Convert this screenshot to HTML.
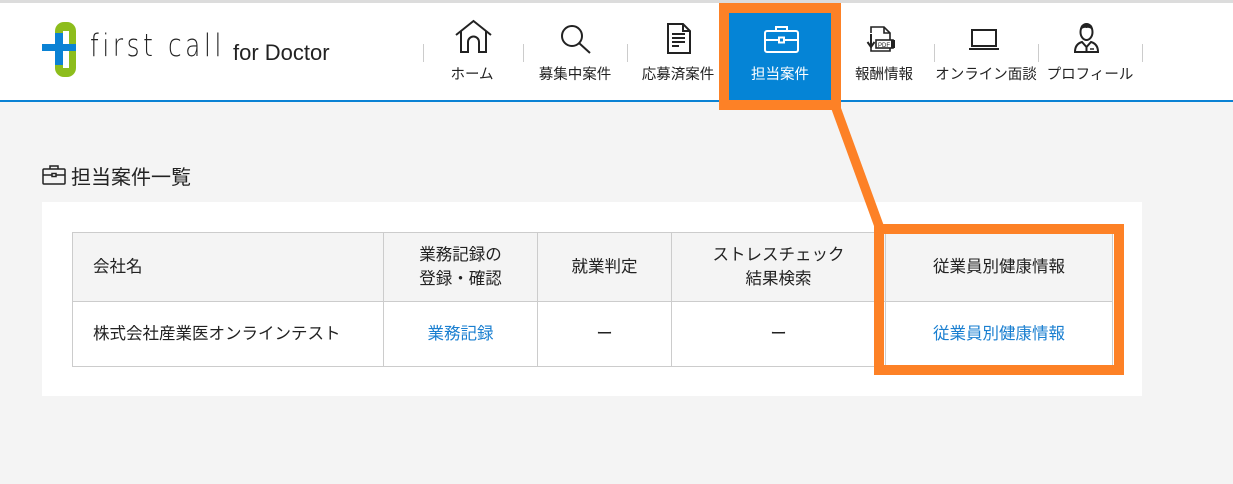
<!DOCTYPE html>
<html><head><meta charset="utf-8">
<style>
*{margin:0;padding:0;box-sizing:border-box}
body{width:1233px;height:484px;background:#f4f4f4;font-family:"Liberation Sans","Noto Sans CJK JP",sans-serif;position:relative;overflow:hidden;color:#222}
.top{position:absolute;left:0;top:0;width:1233px;height:3px;background:#dcdcdc}
.hdr{position:absolute;left:0;top:3px;width:1233px;height:99px;background:#fff;border-bottom:2px solid #0a82d4}
.abs{position:absolute}
.lbl{position:absolute;top:63px;font-size:14.5px;text-align:center;width:110px;white-space:nowrap;color:#222}
.sep{position:absolute;top:44px;width:1px;height:18px;background:#ccc}
svg{position:absolute;overflow:visible}
.panel{position:absolute;left:42px;top:202px;width:1100px;height:194px;background:#fff}
table{position:absolute;left:72px;top:232px;border-collapse:collapse;font-size:16.5px}
td{border:1px solid #ccc;text-align:center;vertical-align:middle;line-height:24px}
tr.h td{background:#f4f4f4;height:69px}
tr.b td{height:65px}
a{color:#1a7fd0;text-decoration:none}
.ob{position:absolute;border:10px solid #fd8126}
</style></head><body>
<div class="top"></div>
<div class="hdr"></div>
<!-- logo -->
<svg style="left:0;top:0" width="80" height="90">
<rect x="55" y="22" width="21" height="55" rx="9" fill="#8dbd1c"/>
<rect x="63" y="31" width="6" height="37" fill="#fff"/>
<rect x="55" y="33" width="8" height="32" fill="#0a82d4"/>
<rect x="42" y="44" width="34" height="7" fill="#0a82d4"/>
</svg>
<div class="abs" style="left:90px;top:28px;font-size:31px;letter-spacing:4.5px;color:#222;font-family:'DejaVu Sans','Liberation Sans',sans-serif;transform:scaleX(0.8);transform-origin:left;font-weight:200">first call</div>
<div class="abs" style="left:233px;top:40px;font-size:22px;color:#222">for Doctor</div>

<!-- separators -->
<div class="sep" style="left:423px"></div>
<div class="sep" style="left:523px"></div>
<div class="sep" style="left:627px"></div>
<div class="sep" style="left:934px"></div>
<div class="sep" style="left:1038px"></div>
<div class="sep" style="left:1142px"></div>

<!-- active -->
<div class="ob" style="left:719px;top:3px;width:122px;height:107px;background:#0584d6"></div>

<!-- icons -->
<svg style="left:455px;top:20px" width="37" height="33" fill="none" stroke="#222" stroke-width="2">
<path d="M1 15 L18.5 1 L36 15"/><path d="M6 11 V32 H13 V22 a5.5 5.5 0 0 1 11 0 V32 H31 V11"/></svg>
<svg style="left:561px;top:25px" width="30" height="29" fill="none" stroke="#222" stroke-width="2">
<circle cx="11" cy="11" r="10"/><path d="M18 18 L29 28"/></svg>
<svg style="left:667px;top:23px" width="24" height="31" fill="none" stroke="#222" stroke-width="2">
<path d="M1 1 H16 L23 8 V30 H1 Z"/><path d="M16 1 V8 H23"/><path d="M5 11H18M5 15H18M5 19H18M5 23H12"/></svg>
<svg style="left:764px;top:25px" width="35" height="28" fill="none" stroke="#fff" stroke-width="2">
<rect x="1" y="6" width="33" height="21" rx="2"/><path d="M12 6V2h11v4"/><path d="M1 15h33"/><rect x="15" y="12.5" width="5" height="5" fill="#0584d6"/></svg>
<svg style="left:866px;top:25px" width="30" height="28" fill="none" stroke="#222" stroke-width="1.6">
<path d="M5 8 V2 H18 L24 8 V15"/><path d="M5 20 V26 H24 V22"/><path d="M18 2 V8 H24"/><path d="M5 9 V20 M1.5 17 L5 22 L8.5 17" stroke-width="2"/>
<rect x="10" y="15" width="17" height="8" fill="#fff"/><rect x="25" y="15" width="4" height="8" fill="#222" stroke="none"/>
<text x="12" y="22" font-size="6" fill="#222" stroke="none" font-family="Liberation Sans">PDF</text></svg>
<svg style="left:969px;top:29px" width="30" height="22" fill="none" stroke="#222" stroke-width="2">
<rect x="3" y="1" width="24" height="16"/><path d="M0 20h30"/></svg>
<svg style="left:1074px;top:23px" width="25" height="31">
<ellipse cx="12.5" cy="9" rx="6" ry="8" fill="#fff" stroke="#222" stroke-width="2"/>
<path d="M6 8 Q6 0 12.5 1 Q19 0 19 8 Q16 4 12.5 5 Q9 4 6 8Z" fill="#222"/>
<path d="M1 29 Q1 21 8 19 L12.5 24 L17 19 Q24 21 24 29 Z" fill="#fff" stroke="#222" stroke-width="2"/>
<path d="M12.5 23 V29" stroke="#222" stroke-width="2"/><path d="M16 26h4" stroke="#222" stroke-width="1.5"/></svg>

<!-- labels -->
<div class="lbl" style="left:417px">ホーム</div>
<div class="lbl" style="left:520px">募集中案件</div>
<div class="lbl" style="left:623px">応募済案件</div>
<div class="lbl" style="left:725px;color:#fff">担当案件</div>
<div class="lbl" style="left:829px">報酬情報</div>
<div class="lbl" style="left:931px">オンライン面談</div>
<div class="lbl" style="left:1035px">プロフィール</div>

<!-- title -->
<svg style="left:42px;top:165px" width="24" height="20" fill="none" stroke="#222" stroke-width="1.5">
<rect x="1" y="4" width="22" height="15" rx="1"/><path d="M8 4V1h8v3"/><path d="M1 10h22"/><rect x="10" y="8.5" width="4" height="3" fill="#fff"/></svg>
<div class="abs" style="left:71px;top:161px;font-size:20px;color:#222">担当案件一覧</div>

<div class="panel"></div>
<table>
<tr class="h"><td style="width:311px;text-align:left;padding-left:20px">会社名</td><td style="width:154px">業務記録の<br>登録・確認</td><td style="width:134px">就業判定</td><td style="width:214px">ストレスチェック<br>結果検索</td><td style="width:227px">従業員別健康情報</td></tr>
<tr class="b"><td style="text-align:left;padding-left:20px">株式会社産業医オンラインテスト</td><td><a>業務記録</a></td><td>ー</td><td>ー</td><td><a>従業員別健康情報</a></td></tr>
</table>

<div class="ob" style="left:874px;top:224px;width:250px;height:151px"></div>
<svg style="left:0;top:0" width="1233" height="484"><polygon points="831,108 841,108 884,226 874,226" fill="#fd8126"/></svg>
</body></html>
